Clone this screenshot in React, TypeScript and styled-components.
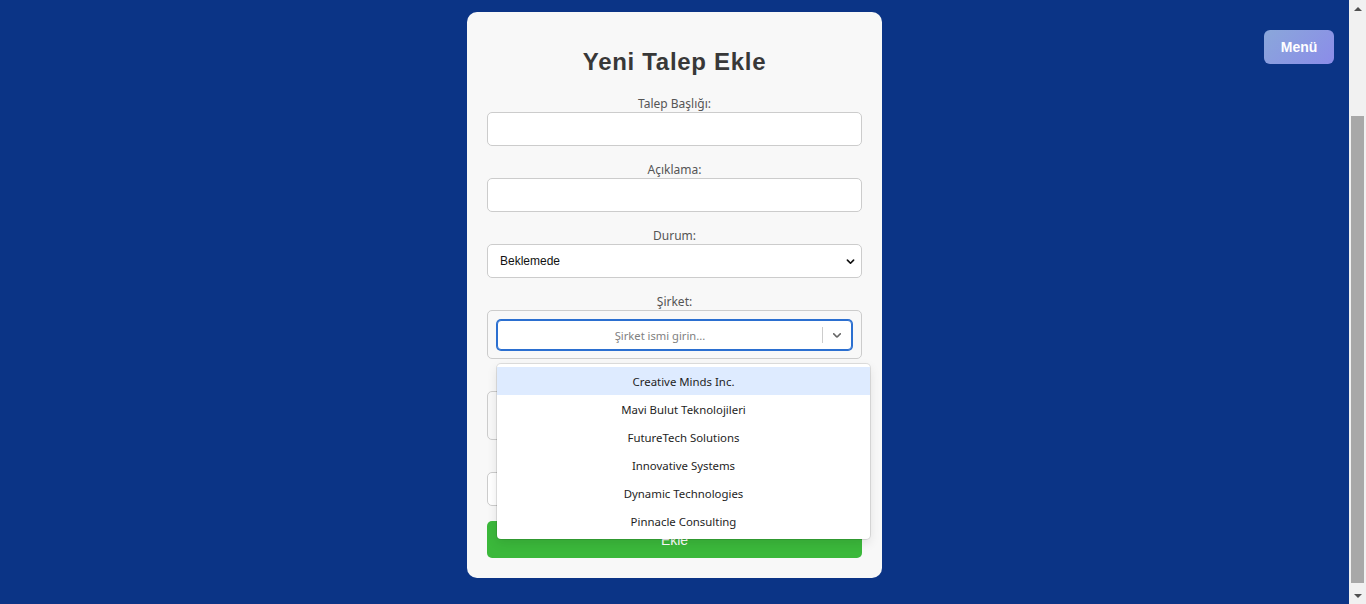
import React from 'react';
import styled, { createGlobalStyle } from 'styled-components';

const GlobalStyle = createGlobalStyle`
  body {
    margin: 0;
    background: #0b3486;
    font-family: 'Noto Sans', 'Open Sans', sans-serif;
  }
  * {
    box-sizing: border-box;
  }
`;

const companies = [
  'Creative Minds Inc.',
  'Mavi Bulut Teknolojileri',
  'FutureTech Solutions',
  'Innovative Systems',
  'Dynamic Technologies',
  'Pinnacle Consulting',
];

function App() {
  return (
    <>
      <GlobalStyle />
      <Page>
        <Card>
          <Title>Yeni Talep Ekle</Title>

          <Field>
            <Label>Talep Başlığı:</Label>
            <Input type='text' />
          </Field>

          <Field>
            <Label>Açıklama:</Label>
            <Input type='text' />
          </Field>

          <Field>
            <Label>Durum:</Label>
            <SelectWrap>
              <Select defaultValue='Beklemede'>
                <option>Beklemede</option>
                <option>Devam Ediyor</option>
                <option>Tamamlandı</option>
              </Select>
              <SelectArrow viewBox='0 0 16 16'>
                <path d='M3.5 6l4.5 4.5L12.5 6' fill='none' stroke='#111' strokeWidth='2.4' strokeLinecap='round' strokeLinejoin='round' />
              </SelectArrow>
            </SelectWrap>
          </Field>

          <Field>
            <Label>Şirket:</Label>
            <Boxed>
              <Control $focused>
                <Placeholder>Şirket ismi girin...</Placeholder>
                <Separator />
                <Indicator>
                  <svg width='20' height='20' viewBox='0 0 20 20'>
                    <path d='M4.516 7.548c0.436-0.446 1.043-0.481 1.576 0l3.908 3.747 3.908-3.747c0.533-0.481 1.141-0.446 1.574 0 0.436 0.445 0.408 1.197 0 1.615-0.406 0.418-4.695 4.502-4.695 4.502-0.217 0.223-0.502 0.335-0.787 0.335s-0.570-0.112-0.789-0.335c0 0-4.287-4.084-4.695-4.502s-0.436-1.170 0-1.615z' fill='#666' />
                  </svg>
                </Indicator>
                <Menu>
                  {companies.map((c, i) => (
                    <Option key={c} $active={i === 0}>{c}</Option>
                  ))}
                </Menu>
              </Control>
            </Boxed>
          </Field>

          <Field>
            <Label>Atanan Kişi:</Label>
            <Boxed>
              <Control>
                <Placeholder>Kişi seçin...</Placeholder>
                <Separator />
                <Indicator />
              </Control>
            </Boxed>
          </Field>

          <Field>
            <Label>Tarih:</Label>
            <Input type='text' />
          </Field>

          <Submit type='button'>Ekle</Submit>
        </Card>
      </Page>
      <MenuButton type='button'>Menü</MenuButton>
      <ScrollBar>
        <ScrollArrow $dir='up' />
        <ScrollTrack>
          <ScrollThumb />
        </ScrollTrack>
        <ScrollArrow $dir='down' />
      </ScrollBar>
    </>
  );
}

export default App;

const Page = styled.div`
  padding: 12px 17px 26px 0;
`;

const Card = styled.div`
  width: 415px;
  margin: 0 auto;
  padding: 20px;
  background: #f8f8f8;
  border-radius: 10px;
  display: flex;
  flex-direction: column;
  gap: 16px;
`;

const Title = styled.h2`
  margin: 16px 0 4px;
  text-align: center;
  font-family: 'Liberation Sans', Arial, sans-serif;
  font-size: 24px;
  line-height: 28px;
  letter-spacing: 0.7px;
  font-weight: bold;
  color: #383838;
`;

const Field = styled.div`
  display: flex;
  flex-direction: column;
`;

const Label = styled.label`
  display: block;
  text-align: center;
  font-size: 12px;
  line-height: 16px;
  color: #555;
`;

const Input = styled.input`
  width: 100%;
  height: 34px;
  padding: 0 12px;
  border: 1px solid #ccc;
  border-radius: 5px;
  background: #fff;
  font-size: 12px;
  outline: none;
`;

const SelectWrap = styled.div`
  position: relative;
`;

const Select = styled.select`
  width: 100%;
  height: 34px;
  padding: 0 12px;
  border: 1px solid #ccc;
  border-radius: 5px;
  background: #fff;
  appearance: none;
  font-family: 'Liberation Sans', Arial, sans-serif;
  font-size: 12px;
  color: #111;
  outline: none;
`;

const SelectArrow = styled.svg`
  position: absolute;
  right: 6px;
  top: 12px;
  width: 11px;
  height: 11px;
  pointer-events: none;
`;

const Boxed = styled.div`
  padding: 9px 9px 8px;
  border: 1px solid #ccc;
  border-radius: 5px;
  background: #f8f8f8;
`;

const Control = styled.div<{ $focused?: boolean }>`
  position: relative;
  display: flex;
  align-items: center;
  height: 30px;
  background: #fff;
  border-radius: 4px;
  border: 1px solid ${(p) => (p.$focused ? '#2b6fd0' : '#ccc')};
  box-shadow: ${(p) => (p.$focused ? '0 0 0 1px #2b6fd0' : 'none')};
`;

const Placeholder = styled.div`
  flex: 1;
  text-align: center;
  font-size: 11.2px;
  color: #808080;
`;

const Separator = styled.span`
  align-self: stretch;
  width: 1px;
  margin: 6px 0;
  background: #ccc;
`;

const Indicator = styled.div`
  width: 28px;
  display: flex;
  align-items: center;
  justify-content: center;
  svg {
    width: 14px;
    height: 14px;
  }
`;

const Menu = styled.div`
  position: absolute;
  top: 100%;
  left: -1px;
  margin-top: 15px;
  width: 373px;
  padding: 3px 0 4px;
  background: #fff;
  border-radius: 4px;
  box-shadow: 0 0 0 1px rgba(0, 0, 0, 0.1), 0 4px 11px rgba(0, 0, 0, 0.1);
  z-index: 5;
`;

const Option = styled.div<{ $active?: boolean }>`
  height: 28px;
  display: flex;
  align-items: center;
  justify-content: center;
  font-size: 11.4px;
  color: #1e1e1e;
  background: ${(p) => (p.$active ? '#deebff' : 'transparent')};
`;

const Submit = styled.button`
  margin-top: -1px;
  height: 37px;
  border: none;
  border-radius: 5px;
  background: #3bb83b;
  color: #fff;
  font-family: 'Liberation Sans', Arial, sans-serif;
  font-size: 14px;
  cursor: pointer;
`;

const MenuButton = styled.button`
  position: fixed;
  top: 30px;
  right: 32px;
  width: 70px;
  height: 34px;
  border: none;
  border-radius: 6px;
  background: linear-gradient(135deg, #8aa7da, #8b8ce9);
  color: #fff;
  font-family: 'Liberation Sans', Arial, sans-serif;
  font-size: 14px;
  font-weight: bold;
  cursor: pointer;
`;

const ScrollBar = styled.div`
  position: fixed;
  top: 0;
  right: 0;
  width: 17px;
  height: 100vh;
  background: #f1f1f1;
  display: flex;
  flex-direction: column;
`;

const ScrollArrow = styled.div<{ $dir: 'up' | 'down' }>`
  height: 17px;
  display: flex;
  align-items: center;
  justify-content: center;
  &::before {
    content: '';
    border-left: 4px solid transparent;
    border-right: 4px solid transparent;
    ${(p) =>
      p.$dir === 'up'
        ? 'border-bottom: 4px solid #505050;'
        : 'border-top: 4px solid #505050;'}
  }
`;

const ScrollTrack = styled.div`
  flex: 1;
  padding: 99px 2px 4px;
`;

const ScrollThumb = styled.div`
  height: 100%;
  background: #a8a8a8;
`;
